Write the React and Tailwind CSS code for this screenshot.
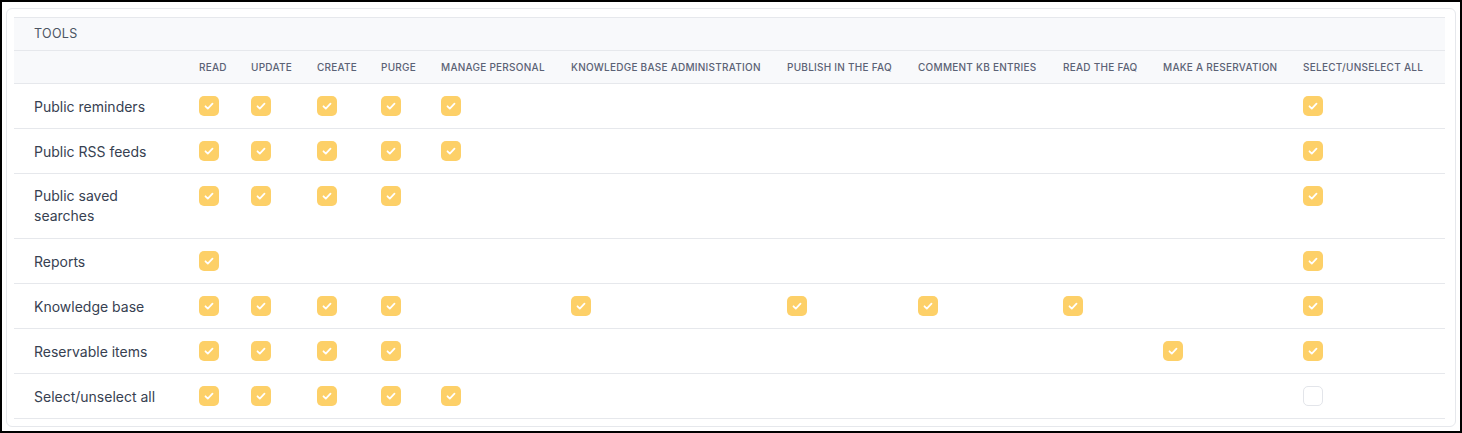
const cols = [
  ['READ', 52], ['UPDATE', 66], ['CREATE', 64], ['PURGE', 60], ['MANAGE PERSONAL', 130],
  ['KNOWLEDGE BASE ADMINISTRATION', 216], ['PUBLISH IN THE FAQ', 131], ['COMMENT KB ENTRIES', 145],
  ['READ THE FAQ', 100], ['MAKE A RESERVATION', 140], ['SELECT/UNSELECT ALL', 152],
];

const rows = [
  { label: 'Public reminders', on: [0, 1, 2, 3, 4, 10] },
  { label: 'Public RSS feeds', on: [0, 1, 2, 3, 4, 10] },
  { label: 'Public saved searches', on: [0, 1, 2, 3, 10], tall: true },
  { label: 'Reports', on: [0, 10] },
  { label: 'Knowledge base', on: [0, 1, 2, 3, 5, 6, 7, 8, 10] },
  { label: 'Reservable items', on: [0, 1, 2, 3, 9, 10] },
  { label: 'Select/unselect all', on: [0, 1, 2, 3, 4], empty: [10] },
];

function Check({ checked }) {
  if (!checked) return <div className="w-5 h-5 rounded-[5px] border border-[#e3e5ea] bg-white" />;
  return (
    <div className="w-5 h-5 rounded-[5px] bg-[#fdd068] flex items-center justify-center">
      <svg width="12" height="12" viewBox="0 0 12 12" fill="none">
        <path d="M2.5 6.3l2.3 2.3 4.7-4.9" stroke="white" strokeWidth="1.8" strokeLinecap="round" strokeLinejoin="round" />
      </svg>
    </div>
  );
}

export default function App() {
  return (
    <div className="w-[1462px] h-[433px] bg-white border-2 border-black p-[4px] pt-[6px] overflow-hidden" style={{ fontFamily: 'Inter, sans-serif' }}>
      <div className="border border-[#e6e8ec] rounded-md bg-white px-[7px] pt-[8px] h-full">
        <table className="table-fixed border-collapse w-[1431px] text-[#374151]">
          <colgroup>
            <col style={{ width: 175 }} />
            {cols.map(([n, w]) => <col key={n} style={{ width: w }} />)}
          </colgroup>
          <thead>
            <tr className="bg-[#f8f9fb] border-t border-b border-[#e6e8ec]">
              <th colSpan={12} className="text-left pl-[20px] h-[33px] text-[12.5px] font-normal tracking-wide text-[#4b5563]">TOOLS</th>
            </tr>
            <tr className="bg-[#f8f9fb] border-b border-[#e6e8ec]">
              <th />
              {cols.map(([n]) => (
                <th key={n} className="text-left px-[10px] h-[33px] text-[10px] font-medium tracking-wide text-[#5b6275] whitespace-nowrap">{n}</th>
              ))}
            </tr>
          </thead>
          <tbody>
            {rows.map(r => (
              <tr key={r.label} className={`border-b border-[#e6e8ec] ${r.tall ? 'h-[65px]' : 'h-[45px]'}`}>
                <td className={`pl-[20px] pr-[10px] text-[14px] text-[#374151] ${r.tall ? 'align-top pt-[12px] leading-[20px]' : ''}`}>
                  {r.tall ? <span className="block w-[110px]">{r.label}</span> : r.label}
                </td>
                {cols.map(([n], i) => (
                  <td key={n} className={`px-[10px] ${r.tall ? 'align-top pt-[12px]' : ''}`}>
                    {r.on.includes(i) ? <Check checked /> : r.empty && r.empty.includes(i) ? <Check /> : null}
                  </td>
                ))}
              </tr>
            ))}
          </tbody>
        </table>
      </div>
    </div>
  );
}
